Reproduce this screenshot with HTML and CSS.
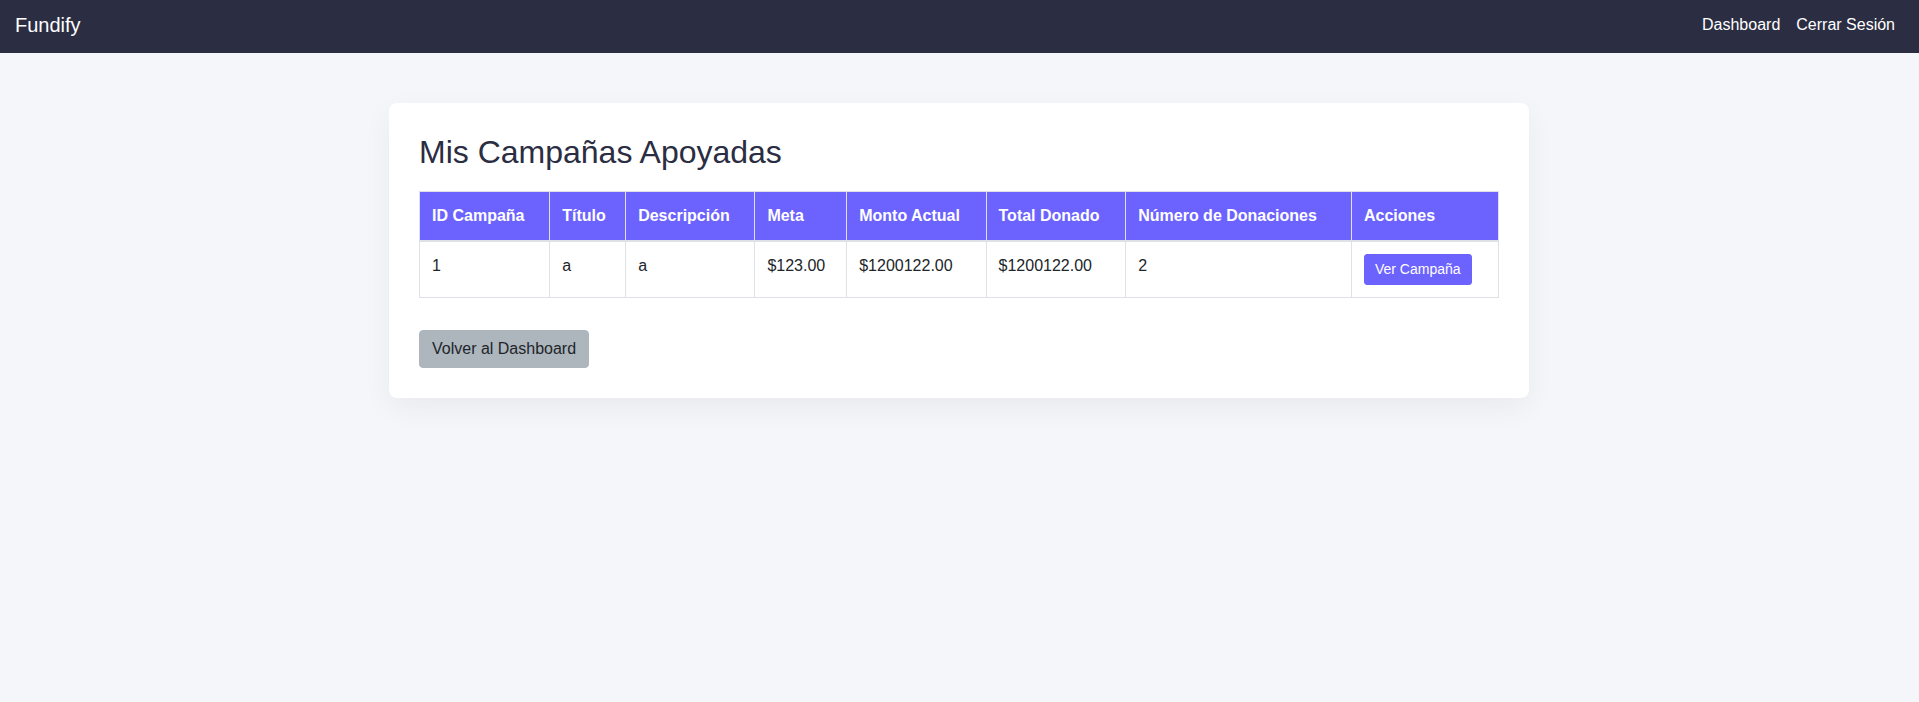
FILE: index.html
```html
<!DOCTYPE html>
<html lang="es">
<head>
<meta charset="utf-8">
<meta name="viewport" content="width=device-width, initial-scale=1">
<title>Mis Campañas Apoyadas</title>
<link rel="stylesheet" href="styles.css">
</head>
<body>
<nav class="navbar">
  <a class="navbar-brand" href="#">Fundify</a>
  <ul class="navbar-nav">
    <li><a class="nav-link" href="#">Dashboard</a></li>
    <li><a class="nav-link" href="#">Cerrar Sesión</a></li>
  </ul>
</nav>
<main class="page">
  <section class="container">
    <h2 class="title">Mis Campañas Apoyadas</h2>
    <table class="table">
      <thead>
        <tr>
          <th scope="col">ID Campaña</th>
          <th scope="col">Título</th>
          <th scope="col">Descripción</th>
          <th scope="col">Meta</th>
          <th scope="col">Monto Actual</th>
          <th scope="col">Total Donado</th>
          <th scope="col">Número de Donaciones</th>
          <th scope="col">Acciones</th>
        </tr>
      </thead>
      <tbody>
        <tr>
          <td>1</td>
          <td>a</td>
          <td>a</td>
          <td>$123.00</td>
          <td>$1200122.00</td>
          <td>$1200122.00</td>
          <td>2</td>
          <td><a class="btn btn-primary btn-sm" href="#">Ver Campaña</a></td>
        </tr>
      </tbody>
    </table>
    <a class="btn btn-secondary" href="#">Volver al Dashboard</a>
  </section>
</main>
</body>
</html>
```
FILE: styles.css
```css
*,
*::before,
*::after {
  box-sizing: border-box;
}

body {
  min-height: 100vh;
  margin: 0;
  background: #f4f6fa;
  color: #212529;
  font-family: "Liberation Sans", Arial, sans-serif;
  font-size: 16px;
  line-height: 24px;
}

a {
  text-decoration: none;
}

.navbar {
  display: flex;
  align-items: center;
  justify-content: space-between;
  padding: 5px 16px 8px 15px;
  background: #2b2d42;
}

.navbar-brand {
  padding: 5px 0;
  color: #fff;
  font-size: 20px;
  line-height: 30px;
}

.navbar-nav {
  display: flex;
  margin: 0;
  padding: 0;
  list-style: none;
}

.nav-link {
  display: block;
  padding: 8px;
  color: #fff;
}

.page {
  padding: 50px 16px 50px 15px;
}

.container {
  max-width: 1140px;
  margin: 0 auto;
  padding: 30px;
  background: #fff;
  border-radius: 8px;
  box-shadow: 0 10px 30px rgba(0, 0, 0, 0.05);
}

.title {
  margin: 0 0 20px;
  color: #2b2d42;
  font-size: 32px;
  font-weight: 500;
  line-height: 38px;
}

.table {
  width: 100%;
  margin-bottom: 32px;
  border: 1px solid #dee2e6;
  border-collapse: collapse;
}

.table th,
.table td {
  padding: 12px;
  border: 1px solid #dee2e6;
  text-align: left;
  vertical-align: top;
}

.table th {
  border-bottom-width: 2px;
  background: #6c63ff;
  color: #fff;
}

.btn {
  display: inline-block;
  padding: 6px 12px;
  border: 1px solid transparent;
  border-radius: 4px;
  vertical-align: middle;
}

.btn-sm {
  padding: 4px 10px;
  border-radius: 3px;
  font-size: 14px;
  line-height: 21px;
}

.btn-primary {
  background: #6c63ff;
  border-color: #6c63ff;
  color: #fff;
}

.btn-secondary {
  background: #adb5bd;
  border-color: #adb5bd;
  color: #212529;
}
```
